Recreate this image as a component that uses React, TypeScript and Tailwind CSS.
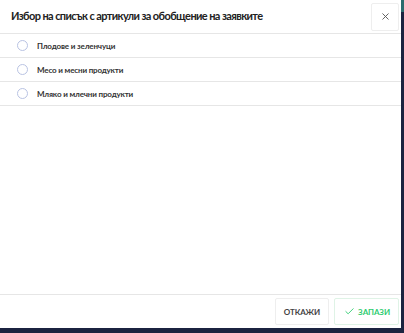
import React, { useState } from 'react';
import { X, Check } from 'lucide-react';

const items = ['Плодове и зеленчуци', 'Месо и месни продукти', 'Мляко и млечни продукти'];

export default function App() {
  const [selected, setSelected] = useState<number | null>(null);

  return (
    <div className="w-[404px] h-[333px] bg-[#1b2340] flex flex-col font-['Lato',sans-serif]">
      <div className="flex flex-1 min-h-0">
        <div className="w-[401px] h-[328px] bg-white flex flex-col">
          {/* header */}
          <div className="h-[34px] flex items-center justify-between pl-[11px] pr-[2px] border-b border-[#e6e6e6]">
            <h3 className="text-[11px] font-bold text-[#222] tracking-[-0.6px]">
              Избор на списък с артикули за обобщение на заявките
            </h3>
            <button className="w-[28px] h-[28px] flex items-center justify-center border border-[#eeeeee] rounded-[2px]">
              <X size={11} strokeWidth={2} className="text-[#555]" />
            </button>
          </div>

          {/* list */}
          <div className="flex-1">
            {items.map((label, i) => (
              <label
                key={label}
                className="h-[24px] flex items-center border-b border-[#e6e6e6] cursor-pointer"
                onClick={() => setSelected(i)}
              >
                <span className="ml-[17px] w-[11px] h-[11px] rounded-full border border-[#b9c3e3] flex items-center justify-center">
                  {selected === i && <span className="w-[5px] h-[5px] rounded-full bg-[#3b82f6]" />}
                </span>
                <span className="ml-[9px] text-[8px] font-bold text-[#333] tracking-[-0.15px]">{label}</span>
              </label>
            ))}
          </div>

          {/* footer */}
          <div className="h-[34px] border-t border-[#e6e6e6] flex items-center justify-end gap-[5px] pr-[2px]">
            <button className="h-[27px] px-[8px] border border-[#eeeeee] rounded-[2px] text-[8px] font-bold text-[#444] uppercase tracking-[-0.1px]">
              Откажи
            </button>
            <button className="h-[27px] pl-[9px] pr-[8px] border border-[#dff3e6] rounded-[2px] text-[8px] font-bold text-[#2ecc71] uppercase tracking-[-0.1px] flex items-center gap-[3px]">
              <Check size={11} strokeWidth={2} />
              Запази
            </button>
          </div>
        </div>
        <div className="flex-1 flex flex-col">
          <div className="h-[12px] bg-[#2c6b6e]" />
        </div>
      </div>
      <div className="h-[5px]" />
    </div>
  );
}
